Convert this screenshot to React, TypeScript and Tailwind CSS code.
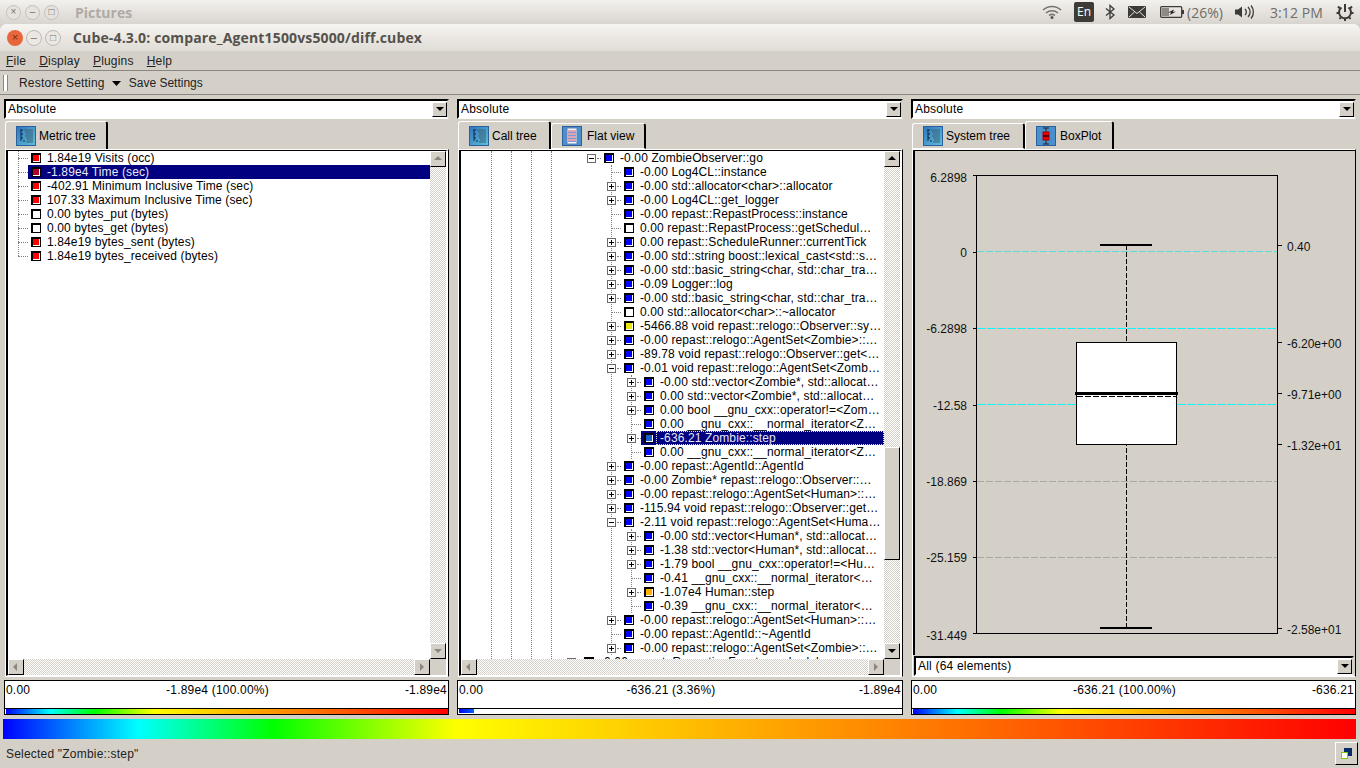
type Row = { d: number; e?: "+" | "-"; c: string; t: string; sel?: boolean; focus?: boolean };

const blue = "bg-[#0000ff]";
const red = "bg-[#ff0000]";
const white = "bg-white";

const metricRows: Row[] = [
  { d: 0, c: red, t: "1.84e19 Visits (occ)" },
  { d: 0, c: "bg-[#b00030]", t: "-1.89e4 Time (sec)", sel: true },
  { d: 0, c: red, t: "-402.91 Minimum Inclusive Time (sec)" },
  { d: 0, c: red, t: "107.33 Maximum Inclusive Time (sec)" },
  { d: 0, c: white, t: "0.00 bytes_put (bytes)" },
  { d: 0, c: white, t: "0.00 bytes_get (bytes)" },
  { d: 0, c: red, t: "1.84e19 bytes_sent (bytes)" },
  { d: 0, c: red, t: "1.84e19 bytes_received (bytes)" },
];

const callRows: Row[] = [
  { d: 0, e: "-", c: blue, t: "-0.00 ZombieObserver::go" },
  { d: 1, c: blue, t: "-0.00 Log4CL::instance" },
  { d: 1, e: "+", c: blue, t: "-0.00 std::allocator<char>::allocator" },
  { d: 1, e: "+", c: blue, t: "-0.00 Log4CL::get_logger" },
  { d: 1, c: blue, t: "-0.00 repast::RepastProcess::instance" },
  { d: 1, c: white, t: "0.00 repast::RepastProcess::getSchedul…" },
  { d: 1, e: "+", c: blue, t: "0.00 repast::ScheduleRunner::currentTick" },
  { d: 1, e: "+", c: blue, t: "-0.00 std::string boost::lexical_cast<std::s…" },
  { d: 1, e: "+", c: blue, t: "-0.00 std::basic_string<char, std::char_tra…" },
  { d: 1, e: "+", c: blue, t: "-0.09 Logger::log" },
  { d: 1, e: "+", c: blue, t: "-0.00 std::basic_string<char, std::char_tra…" },
  { d: 1, c: white, t: "0.00 std::allocator<char>::~allocator" },
  { d: 1, e: "+", c: "bg-[#e8e800]", t: "-5466.88 void repast::relogo::Observer::sy…" },
  { d: 1, e: "+", c: blue, t: "-0.00 repast::relogo::AgentSet<Zombie>::…" },
  { d: 1, e: "+", c: blue, t: "-89.78 void repast::relogo::Observer::get<…" },
  { d: 1, e: "-", c: blue, t: "-0.01 void repast::relogo::AgentSet<Zomb…" },
  { d: 2, e: "+", c: blue, t: "-0.00 std::vector<Zombie*, std::allocat…" },
  { d: 2, e: "+", c: blue, t: "0.00 std::vector<Zombie*, std::allocat…" },
  { d: 2, e: "+", c: blue, t: "0.00 bool __gnu_cxx::operator!=<Zom…" },
  { d: 2, c: blue, t: "0.00 __gnu_cxx::__normal_iterator<Z…" },
  { d: 2, e: "+", c: "bg-[#1a5fd0]", t: "-636.21 Zombie::step", sel: true, focus: true },
  { d: 2, c: blue, t: "0.00 __gnu_cxx::__normal_iterator<Z…" },
  { d: 1, e: "+", c: blue, t: "-0.00 repast::AgentId::AgentId" },
  { d: 1, e: "+", c: blue, t: "-0.00 Zombie* repast::relogo::Observer::…" },
  { d: 1, e: "+", c: blue, t: "-0.00 repast::relogo::AgentSet<Human>::…" },
  { d: 1, e: "+", c: blue, t: "-115.94 void repast::relogo::Observer::get…" },
  { d: 1, e: "-", c: blue, t: "-2.11 void repast::relogo::AgentSet<Huma…" },
  { d: 2, e: "+", c: blue, t: "-0.00 std::vector<Human*, std::allocat…" },
  { d: 2, e: "+", c: blue, t: "-1.38 std::vector<Human*, std::allocat…" },
  { d: 2, e: "+", c: blue, t: "-1.79 bool __gnu_cxx::operator!=<Hu…" },
  { d: 2, c: blue, t: "-0.41 __gnu_cxx::__normal_iterator<…" },
  { d: 2, e: "+", c: "bg-[#ffb000]", t: "-1.07e4 Human::step" },
  { d: 2, c: blue, t: "-0.39 __gnu_cxx::__normal_iterator<…" },
  { d: 1, e: "+", c: blue, t: "-0.00 repast::relogo::AgentSet<Human>::…" },
  { d: 1, c: blue, t: "-0.00 repast::AgentId::~AgentId" },
  { d: 1, e: "+", c: blue, t: "-0.00 repast::relogo::AgentSet<Zombie>::…" },
  { d: -1, e: "+", c: "bg-black", t: "-0.00 repast::RepeatingFunctor::schedule" },
];

const dither = "bg-[repeating-conic-gradient(#ffffff_0_25%,#d4d0c8_0_50%)] bg-[length:2px_2px]";
const spectrum =
  "bg-[linear-gradient(to_right,#0000ff_0%,#00ffff_10%,#00ff00_20%,#ffff00_33.5%,#ff0000_100%)]";

function Expander({ kind }: { kind: "+" | "-" }) {
  return (
    <svg width="9" height="9" viewBox="0 0 9 9" shapeRendering="crispEdges" className="shrink-0">
      <rect x="0.5" y="0.5" width="8" height="8" fill="#ffffff" stroke="#6a6a6a" />
      <path d={kind === "+" ? "M2 4.500h5M4.500 2v5" : "M2 4.500h5"} stroke="#000000" fill="none" />
    </svg>
  );
}

function TreeRow({ row, base }: { row: Row; base: number }) {
  return (
    <div className="flex h-[14px] items-center" style={{ paddingLeft: base + row.d * 20 }}>
      <div className="relative flex h-[14px] w-[14px] shrink-0 items-center">
        {row.e ? <Expander kind={row.e} /> : null}
        <span
          className={
            row.e
              ? "ml-px w-[4px] border-t border-dotted border-[#808080]"
              : "ml-[4px] w-[10px] border-t border-dotted border-[#808080]"
          }
        />
      </div>
      <div
        className={
          row.sel
            ? "flex h-[14px] min-w-0 flex-1 items-center bg-[#000080] pl-[3px] text-[#e8e8f4]"
            : "flex h-[14px] min-w-0 flex-1 items-center pl-[3px] text-black"
        }
      >
        <span
          className={`h-[10px] w-[10px] shrink-0 border-t-2 border-l-2 border-r border-b border-black shadow-[inset_-1px_-1px_0_#ffffff] ${row.c}`}
        />
        {row.focus ? (
          <span className="ml-[2px] h-[14px] flex-1 whitespace-pre border border-dotted border-[#e0e0c0] pl-[3px] leading-[12px]">
            {row.t}
          </span>
        ) : (
          <span className="ml-[6px] whitespace-pre">{row.t}</span>
        )}
      </div>
    </div>
  );
}

function Arrow({ dir, dim }: { dir: "up" | "down" | "left" | "right"; dim?: boolean }) {
  const pts = {
    up: "1,6 9,6 5,2",
    down: "1,3 9,3 5,7",
    left: "6,1 6,9 2,5",
    right: "3,1 3,9 7,5",
  }[dir];
  return (
    <svg width="10" height="10" viewBox="0 0 10 10">
      <polygon points={pts} fill={dim ? "#8a8780" : "#000000"} />
    </svg>
  );
}

function ScrollBtn({ dir, dim }: { dir: "up" | "down" | "left" | "right"; dim?: boolean }) {
  return (
    <div className="flex h-4 w-4 shrink-0 items-center justify-center border border-t-white border-l-white border-r-black border-b-black bg-[#d4d0c8]">
      <Arrow dir={dir} dim={dim} />
    </div>
  );
}

function Combo({ label }: { label: string }) {
  return (
    <div className="flex h-[20px] items-center border-2 border-t-black border-l-black border-r-[#d4d0c8] border-b-white bg-white pl-[2px]">
      <span className="flex-1 text-[12px] text-black">{label}</span>
      <div className="flex h-[15px] w-[15px] items-center justify-center border border-t-white border-l-white border-r-black border-b-black bg-[#d4d0c8]">
        <Arrow dir="down" />
      </div>
    </div>
  );
}

function TreeIcon() {
  return (
    <svg width="20" height="20" viewBox="0 0 20 20" className="shrink-0">
      <defs>
        <linearGradient id="tabg" x1="0" y1="0" x2="1" y2="1">
          <stop offset="0" stopColor="#2f74c0" />
          <stop offset="1" stopColor="#5fc2d8" />
        </linearGradient>
      </defs>
      <rect x="0.5" y="0.5" width="19" height="19" fill="url(#tabg)" stroke="#2c5f9e" />
      <path d="M4 4h3M5 4v11M5 8h2M5 12h2M7 15h2" stroke="#10243c" fill="none" />
      <path d="M8 4h9M9 6h8M10 8h7M9 10h8M10 12h7M11 14h6M10 16h7" stroke="#3d5f70" fill="none" />
    </svg>
  );
}

function FlatIcon() {
  return (
    <svg width="20" height="20" viewBox="0 0 20 20" className="mr-[2px] shrink-0">
      <rect x="0.5" y="0.5" width="19" height="19" fill="#4a90cc" stroke="#2c5f9e" />
      <rect x="5" y="2" width="10" height="16" fill="#f2f4fa" stroke="#5a7fb0" />
      <path d="M6 5h8M6 8h8M6 11h8M6 14h8" stroke="#d05070" fill="none" />
      <path d="M6 6.500h8M6 9.500h8M6 12.500h8M6 15.500h8" stroke="#7a9ad0" fill="none" />
    </svg>
  );
}

function BoxIcon() {
  return (
    <svg width="20" height="20" viewBox="0 0 20 20" className="mr-[1px] shrink-0">
      <rect x="0.5" y="0.5" width="19" height="19" fill="#4a90cc" stroke="#2c5f9e" />
      <path d="M7 2h6M10 2v16M7 18h6" stroke="#222222" fill="none" />
      <rect x="7" y="6" width="6" height="8" fill="#ee0000" stroke="#aa0000" />
      <path d="M7 10h6" stroke="#300000" strokeWidth="1.500" />
    </svg>
  );
}

function Tab({
  label,
  icon,
  active,
  w,
}: {
  label: string;
  icon: React.ReactNode;
  active?: boolean;
  w: string;
}) {
  return (
    <div
      className={
        active
          ? `flex h-[28px] items-center gap-[3px] rounded-t-[3px] border-t border-l border-white border-r-2 border-r-black pl-[10px] text-[12px] tracking-normal text-black ${w}`
          : `mt-[2px] flex h-[26px] items-center gap-[3px] rounded-t-[3px] border-t border-l border-b border-white border-r-2 border-r-black pl-[10px] text-[12px] tracking-normal text-black ${w}`
      }
    >
      {icon}
      <span>{label}</span>
    </div>
  );
}

function ValueBar({ l, m, r, partial }: { l: string; m: string; r: string; partial?: boolean }) {
  return (
    <div className="mt-[3px] h-[35px] border border-black bg-white">
      <div className="flex h-[27px] justify-between pr-[1px] pl-px pt-[2px] text-[12px] leading-[14px] text-black">
        <span>{l}</span>
        <span>{m}</span>
        <span>{r}</span>
      </div>
      <div className="h-[6px] border-t border-black bg-white">
        {partial ? (
          <div className="ml-px h-[4px] w-[15px] bg-[linear-gradient(to_right,#0000ff,#0060ff)]" />
        ) : (
          <div className={`ml-px h-[5px] ${spectrum}`} />
        )}
      </div>
    </div>
  );
}

function TreePane({
  rows,
  base,
  guides,
  thumb,
  dim,
}: {
  rows: Row[];
  base: number;
  guides: number[][];
  thumb?: boolean;
  dim?: boolean;
}) {
  return (
    <div className="ml-px h-[528px] border border-t-white border-l-white border-r-black border-b-white">
      <div className="flex h-full flex-col border-t border-l-2 border-r-2 border-b border-t-black border-l-black border-r-white border-b-white">
        <div className="flex min-h-0 flex-1">
          <div className="relative min-w-0 flex-1 overflow-hidden bg-white text-[12px] leading-[14px] tracking-[0.12px]">
            {guides.map(([x, y, h]) => (
              <div
                key={`${x}-${y}`}
                className="absolute w-0 border-l border-dotted border-[#808080]"
                style={{ left: x, top: y, height: h }}
              />
            ))}
            <div className="relative">
              {rows.map((row, i) => (
                <TreeRow key={i} row={row} base={base} />
              ))}
            </div>
          </div>
          <div className="flex w-4 shrink-0 flex-col">
            <ScrollBtn dir="up" dim={dim} />
            {thumb ? (
              <>
                <div className={`h-[280px] ${dither}`} />
                <div className="h-[113px] border border-t-white border-l-white border-r-black border-b-black bg-[#d4d0c8]" />
                <div className={`flex-1 ${dither}`} />
              </>
            ) : (
              <div className={`flex-1 ${dither}`} />
            )}
            <ScrollBtn dir="down" dim={dim} />
          </div>
        </div>
        <div className="flex h-4 shrink-0 pr-4">
          <ScrollBtn dir="left" dim />
          <div className={`flex-1 ${dither}`} />
          <ScrollBtn dir="right" dim />
        </div>
      </div>
    </div>
  );
}

// label, tick y, text centre y
const leftTicks: [string, number, number][] = [
  ["6.2898", 175, 177],
  ["0", 252, 252],
  ["-6.2898", 328, 328],
  ["-12.58", 405, 405],
  ["-18.869", 481, 481],
  ["-25.159", 557, 557],
  ["-31.449", 633, 635],
];

const rightTicks: [string, number, number][] = [
  ["0.40", 245, 246],
  ["-6.20e+00", 342, 343],
  ["-9.71e+00", 393, 394],
  ["-1.32e+01", 444, 445],
  ["-2.58e+01", 628, 629],
];

function BoxPlot() {
  return (
    <svg width="440" height="504" className="block tracking-normal" fontFamily="'Liberation Sans', sans-serif" fontSize="12">
      <g transform="translate(-915 -151)">
        <g shapeRendering="crispEdges">
          <line x1="977" x2="1277" y1="251" y2="251" stroke="#58dcdc" strokeDasharray="7 2" />
          <line x1="977" x2="1277" y1="328" y2="328" stroke="#00ffff" strokeDasharray="9 1" />
          <line x1="977" x2="1277" y1="404" y2="404" stroke="#00ffff" strokeDasharray="9 1" />
          <line x1="977" x2="1277" y1="481" y2="481" stroke="#a9a9a3" strokeDasharray="7 2" />
          <line x1="977" x2="1277" y1="557" y2="557" stroke="#a9a9a3" strokeDasharray="7 2" />
          <rect x="976.500" y="175.500" width="301" height="458" fill="none" stroke="#000000" />
          {leftTicks.map(([t, y]) => (
            <line key={t} x1="973" x2="977" y1={y + 0.5} y2={y + 0.5} stroke="#000000" />
          ))}
          {rightTicks.map(([t, y]) => (
            <line key={t} x1="1278" x2="1282" y1={y + 0.5} y2={y + 0.5} stroke="#000000" />
          ))}
          <line x1="1126.500" x2="1126.500" y1="245" y2="628" stroke="#000000" strokeDasharray="5 2" />
          <rect x="1076.500" y="342.500" width="100" height="102" fill="#ffffff" stroke="#000000" />
          <rect x="1075" y="392" width="103" height="3" fill="#000000" />
          <line x1="1077" x2="1176" y1="396.500" y2="396.500" stroke="#000000" strokeDasharray="6 2" />
          <rect x="1100" y="244" width="52" height="2" fill="#000000" />
          <rect x="1100" y="627" width="52" height="2" fill="#000000" />
        </g>
        {leftTicks.map(([t, , c]) => (
          <text key={t} x="967" y={c + 5} textAnchor="end" fill="#111111">
            {t}
          </text>
        ))}
        {rightTicks.map(([t, , c]) => (
          <text key={t} x="1287" y={c + 5} fill="#111111">
            {t}
          </text>
        ))}
      </g>
    </svg>
  );
}

function TopBar() {
  return (
    <div className="flex h-6 shrink-0 items-center bg-[linear-gradient(to_bottom,#f3f1ee,#d8d4ce)] pl-[6px] pr-[6px] tracking-normal">
      <div className="flex gap-[4px]">
        {["×", "–", "□"].map((g) => (
          <span
            key={g}
            className="flex h-[15px] w-[15px] items-center justify-center rounded-full border border-[#c4c0ba] bg-[#e6e3de] text-[10px] leading-none text-[#77736d]"
          >
            {g}
          </span>
        ))}
      </div>
      <span className="ml-[16px] font-['Open_Sans',sans-serif] text-[14px] font-bold text-[#aeaaa4]">Pictures</span>
      <div className="ml-auto flex items-center font-['Open_Sans',sans-serif] text-[14px] text-[#6f6c68]">
        <svg width="20" height="14" viewBox="0 0 20 14" className="mr-[12px]">
          <path d="M1 5a13 13 0 0 1 18 0M4 8a9 9 0 0 1 12 0M7 10.500a5 5 0 0 1 6 0" stroke="#77736d" strokeWidth="1.500" fill="none" />
          <circle cx="10" cy="12.500" r="1.500" fill="#55524e" />
        </svg>
        <span className="flex h-5 w-5 items-center justify-center rounded-[2px] bg-[#3c3b37] text-[12px] text-white">En</span>
        <svg width="10" height="16" viewBox="0 0 10 16" className="ml-[11px]">
          <path d="M1 4.500 9 11 5 14.500V1.500L9 5 1 11.500" stroke="#3c3b37" strokeWidth="1.300" fill="none" />
        </svg>
        <svg width="18" height="12" viewBox="0 0 18 12" className="ml-[13px]">
          <rect width="18" height="12" rx="1" fill="#3c3b37" />
          <path d="M1 1 9 7.500 17 1M1 11 6.500 6M17 11 11.500 6" stroke="#e6e3de" fill="none" />
        </svg>
        <svg width="24" height="12" viewBox="0 0 24 12" className="ml-[14px]">
          <rect x="0.700" y="0.700" width="21" height="10.600" rx="1" fill="none" stroke="#3c3b37" strokeWidth="1.300" />
          <rect x="2" y="2" width="7" height="8" fill="#8e8b86" />
          <rect x="22" y="4" width="2" height="4" fill="#3c3b37" />
          <path d="M8 6.500 14 3.500 13 6 16 5.500 10 9 11 6.500Z" fill="#2c2b28" />
        </svg>
        <span className="ml-[3px]">(26%)</span>
        <svg width="20" height="14" viewBox="0 0 20 14" className="ml-[12px]">
          <path d="M0 4.500h3L7 1.500v11L3 9.500H0Z" fill="#3c3b37" />
          <path d="M10 4a4 4 0 0 1 0 6M13 2a7 7 0 0 1 0 10M16 0.500a10 10 0 0 1 0 13" stroke="#3c3b37" strokeWidth="1.300" fill="none" />
        </svg>
        <span className="ml-[15px] tracking-[0.1px]">3:12 PM</span>
        <svg width="18" height="18" viewBox="0 0 18 18" className="ml-[13px]">
          <path d="M5.500 4.500a6 6 0 1 0 7 0" stroke="#3c3b37" strokeWidth="2" fill="none" />
          <path d="M9 1v8" stroke="#3c3b37" strokeWidth="2" />
          <path d="M2 3.500 4 5.500M16 3.500 14 5.500M0.500 10h2.500M15 10h2.500M3.500 16 5 14M14.500 16 13 14M9 15.500v2.500" stroke="#3c3b37" strokeWidth="2" />
        </svg>
      </div>
    </div>
  );
}

function Menu({ k, rest }: { k: string; rest: string }) {
  return (
    <span>
      <span className="underline">{k}</span>
      {rest}
    </span>
  );
}

export default function App() {
  return (
    <div className="flex h-[768px] w-[1360px] flex-col overflow-hidden bg-[#d4d0c8] font-['Liberation_Sans',sans-serif] text-[12px] tracking-[0.2px] text-black">
      <TopBar />

      <div className="flex h-[27px] shrink-0 items-center rounded-t-[6px] bg-[linear-gradient(to_bottom,#f6f4f1,#e0dcd6)] pl-[7px]">
        <div className="flex gap-[3px]">
          <span className="flex h-[16px] w-[16px] items-center justify-center rounded-full bg-[#e8663c] text-[11px] leading-none text-[#7a2c10]">×</span>
          <span className="flex h-[16px] w-[16px] items-center justify-center rounded-full border border-[#bdb9b3] bg-[#ebe8e3] text-[11px] leading-none text-[#77736d]">–</span>
          <span className="flex h-[16px] w-[16px] items-center justify-center rounded-full border border-[#bdb9b3] bg-[#ebe8e3] text-[10px] leading-none text-[#77736d]">□</span>
        </div>
        <span className="ml-[12px] font-['Open_Sans',sans-serif] text-[14px] font-bold tracking-[0.15px] text-[#55524c]">
          Cube-4.3.0: compare_Agent1500vs5000/diff.cubex
        </span>
      </div>

      <div className="flex h-[19px] shrink-0 items-center gap-[13px] pl-[6px] text-[#222222]">
        <Menu k="F" rest="ile" />
        <Menu k="D" rest="isplay" />
        <Menu k="P" rest="lugins" />
        <Menu k="H" rest="elp" />
      </div>
      <div className="h-[2px] shrink-0 border-t border-[#8a8780] border-b-white" />

      <div className="flex h-[23px] shrink-0 items-center border-b border-[#8a8780] pl-[3px] text-[#222222]">
        <span className="h-[16px] w-[5px] border-x border-[#8a8780] bg-white" />
        <span className="ml-[11px]">Restore Setting</span>
        <svg width="9" height="5" viewBox="0 0 9 5" className="ml-[7px]">
          <polygon points="0,0 9,0 4.500,5" fill="#000000" />
        </svg>
        <span className="ml-[8px] tracking-normal">Save Settings</span>
      </div>

      <div className="mt-[4px] flex h-[617px] shrink-0 pl-[4px]">
        <div className="w-[445px]">
          <Combo label="Absolute" />
          <div className="mt-[2px] flex h-[28px] items-end pl-px">
            <Tab label="Metric tree" icon={<TreeIcon />} active w="w-[103px]" />
          </div>
          <TreePane rows={metricRows} base={6} dim guides={[[10, 0, 105]]} />
          <ValueBar l="0.00" m="-1.89e4 (100.00%)" r="-1.89e4" />
        </div>

        <div className="ml-[8px] w-[446px]">
          <Combo label="Absolute" />
          <div className="mt-[2px] flex h-[28px] items-end pl-px">
            <Tab label="Call tree" icon={<TreeIcon />} active w="w-[93px]" />
            <Tab label="Flat view" icon={<FlatIcon />} w="w-[95px]" />
          </div>
          <TreePane
            rows={callRows}
            base={126}
            thumb
            guides={[
              [30, 0, 510],
              [50, 0, 510],
              [70, 0, 510],
              [90, 0, 510],
              [150, 14, 490],
              [170, 224, 84],
              [170, 378, 84],
            ]}
          />
          <ValueBar l="0.00" m="-636.21 (3.36%)" r="-1.89e4" partial />
        </div>

        <div className="ml-[8px] w-[445px]">
          <Combo label="Absolute" />
          <div className="mt-[2px] flex h-[28px] items-end pl-px">
            <Tab label="System tree" icon={<TreeIcon />} w="w-[113px]" />
            <Tab label="BoxPlot" icon={<BoxIcon />} active w="w-[89px]" />
          </div>
          <div className="ml-px flex h-[528px] flex-col border border-t-white border-l-white border-r-black border-b-white">
            <div className="h-[505px] border-t border-l-2 border-black">
              <BoxPlot />
            </div>
            <div className="mt-px px-px">
              <Combo label="All (64 elements)" />
            </div>
          </div>
          <ValueBar l="0.00" m="-636.21 (100.00%)" r="-636.21" />
        </div>
      </div>

      <div className="mt-[3px] ml-[3px] mr-[4px] h-[20px] shrink-0">
        <div className={`h-full ${spectrum}`} />
      </div>

      <div className="flex flex-1 items-center pl-[6px] pr-[2px] text-[#222222]">
        <span>Selected "Zombie::step"</span>
        <div className="ml-auto flex h-[23px] w-[23px] items-center justify-center border border-t-white border-l-white border-r-black border-b-black">
          <svg width="13" height="13" viewBox="0 0 13 13">
            <rect x="4" y="1" width="8" height="8" fill="#0a2a6a" />
            <rect x="1.500" y="5.500" width="6" height="6" fill="#ffffff" stroke="#7fd000" />
          </svg>
        </div>
      </div>
    </div>
  );
}
